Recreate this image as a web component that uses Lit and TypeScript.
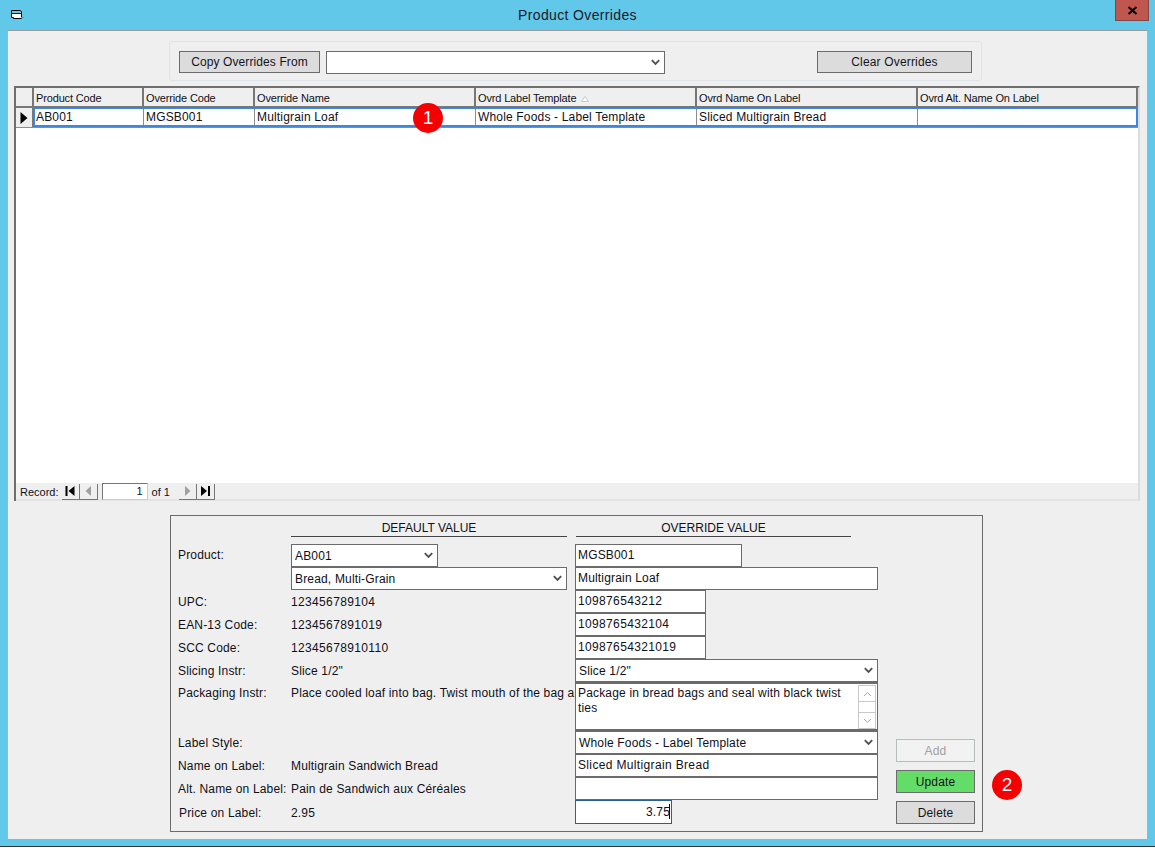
import { LitElement, html, css } from "lit";
import { customElement } from "lit/decorators.js";

const chev = html`<svg class="chev" width="9" height="7" viewBox="0 0 9 7"><path d="M0.8 1.2 L4.5 5 L8.2 1.2" fill="none" stroke="#505050" stroke-width="1.8"/></svg>`;

const cols = [
  ["Product Code", "AB001", 110],
  ["Override Code", "MGSB001", 111],
  ["Override Name", "Multigrain Loaf", 221],
  ["Ovrd Label Template", "Whole Foods - Label Template", 221],
  ["Ovrd Name On Label", "Sliced Multigrain Bread", 221],
  ["Ovrd Alt. Name On Label", "", 220],
] as const;

@customElement("app-root")
export class AppRoot extends LitElement {
  static styles = css`
    :host { display: block; width: 1155px; height: 848px; overflow: hidden; font-family: "Liberation Sans", Arial, sans-serif; font-size: 12px; color: #101018; letter-spacing: 0.17px; }
    * { box-sizing: border-box; }
    .win { width: 1155px; height: 847px; background: #62c8ea; border-bottom: 1px solid #333; display: flex; flex-direction: column; padding: 0 7px 7px; position: relative; }
    .title { height: 30px; flex: none; display: flex; align-items: flex-start; justify-content: center; font-size: 14px; letter-spacing: 0.35px; padding-top: 7px; line-height: 17px; color: #1a1a2a; }
    .appicon { position: absolute; left: 10px; top: 9px; }
    .close { position: absolute; left: 1115px; top: 0; width: 34px; height: 21px; background: #c0574f; border: 1px solid #7b4a48; border-top: none; display: flex; align-items: center; justify-content: center; }
    .client { flex: 1; background: #efefef; border-top: 1px solid #9a9a9a; border-left: 1px solid #b0b0b0; border-right: 1px solid #b0b0b0; padding: 10px 6px 0; display: flex; flex-direction: column; position: relative; }
    .toolbar { width: 813px; height: 40px; margin-left: 155px; flex: none; border: 1px solid #dde4ea; border-radius: 3px; padding: 9px 10px 0 8px; display: flex; align-items: flex-start; }
    .btn { height: 22px; border: 1px solid #6b6b6b; background: #dcdcdc; display: flex; align-items: center; justify-content: center; color: #14141e; flex: none; }
    .copy { width: 141px; margin-left: 1px; letter-spacing: 0.1px; }
    .sel { background: #fff; border: 1px solid #6b6b6b; height: 23px; display: flex; align-items: center; padding: 0 4px 0 3px; justify-content: space-between; flex: none; }
    .sel .chev { flex: none; }
    .tsel { width: 339px; margin-left: 6px; }
    .clear { width: 155px; margin-left: 152px; }
    .grid { margin-top: 5px; width: 1126px; height: 415px; flex: none; background: #fff; border: 2px solid #6f6f6f; border-bottom: none; border-right-color: #dcdcdc; display: flex; flex-direction: column; position: relative; }
    .ghead, .grow { display: flex; flex: none; }
    .ghead { height: 20px; background: #efefef; }
    .ghead .c { flex: none; display: flex; align-items: flex-start; border-right: 2px solid #777; border-bottom: 2px solid #777; padding: 3px 0 0 2px; font-size: 11px; letter-spacing: -0.15px; line-height: 14px; white-space: nowrap; }
    .ghead .sel0 { width: 18px; padding: 0; }
    .grow { height: 20px; border-bottom: 1px solid #8c8c8c; }
    .grow .mark { width: 18px; flex: none; background: #efefef; border-right: 2px solid #777; display: flex; align-items: center; justify-content: center; }
    .gcells { flex: 1 1 0; min-width: 0; display: flex; border: 2px solid #3e87dd; border-top-width: 1px; border-left-width: 1px; }
    .grow .c { flex: none; border-right: 1px solid #8c8c8c; padding: 1px 0 0 2px; line-height: 14px; white-space: nowrap; overflow: hidden; }
    .grow .c:first-child { padding-left: 1px; }
    .grow .c:last-child { border-right: none; flex: 1 1 0; min-width: 0; }
    .sortmark { margin: 5px 0 0 5px; flex: none; }
    .gbody { flex: 1; }
    .nav { height: 18px; flex: none; background: #efefef; border-bottom: 2px solid #e4e4e4; display: flex; align-items: center; padding: 1px 0 0 4px; font-size: 11px; line-height: 14px; letter-spacing: 0; }
    .navb { width: 18px; height: 16px; background: #efefef; border-right: 1px solid #777; border-bottom: 1px solid #777; display: flex; align-items: center; justify-content: center; }
    .navb.first { margin-left: 3px; }
    .navnum { width: 46px; height: 17px; background: #fff; border: 1px solid #777; border-bottom-color: #ccc; border-right-color: #ccc; margin: 0 4px; text-align: right; padding-right: 4px; line-height: 15px; }
    .navof { width: 27px; }
    .panel { margin-top: 14px; margin-left: 156px; width: 813px; height: 317px; flex: none; border: 1px solid #6b6b6b; display: grid; padding: 0 0 0 7px; grid-template-columns: 113px 284px 321px 79px; grid-template-rows: 28px 23px 23px 23px 23px 23px 23px 49px 23px 23px 23px 23px; }
    .ph { letter-spacing: 0; text-align: center; border-bottom: 1px solid #444; height: 21px; padding-top: 5px; line-height: 14px; }
    .ph.d { width: 276px; grid-column: 2; }
    .ph.o { width: 275px; grid-column: 3; margin-left: 1px; }
    .lbl { grid-column: 1; display: flex; align-items: center; white-space: nowrap; padding-top: 1px; }
    .lbl.tight { padding-top: 0; padding-bottom: 1px; }
    .lbl.low { padding-top: 3px; padding-left: 1px; }
    .val { grid-column: 2; display: flex; align-items: center; white-space: nowrap; padding-top: 1px; }
    .val.low { padding-top: 3px; }
    .num { letter-spacing: 0.35px; }
    .lbl.packlbl, .val.packval { align-items: flex-start; padding-top: 4px; }
    .val.packval { overflow: hidden; width: 284px; }
    .c3 { grid-column: 3; }
    .inp { background: #fff; border: 1px solid #6b6b6b; height: 23px; padding: 0 2px 2px; display: flex; align-items: center; white-space: nowrap; }
    .w302 { width: 303px; }
    .w166 { width: 167px; }
    .w130 { width: 131px; }
    .area { position: relative; height: 49px; width: 303px; background: #fff; border: 2px solid #6b6b6b; border-width: 2px 1px; padding: 2px 20px 0 2px; line-height: 15px; }
    .sb { position: absolute; right: 1px; top: 1px; width: 18px; height: 44px; border: 1px solid #c8c8c8; display: grid; grid-template-rows: 15px 1fr 15px; }
    .sb div { display: flex; align-items: center; justify-content: center; }
    .sb div:nth-child(2) { border-top: 1px solid #c8c8c8; border-bottom: 1px solid #c8c8c8; }
    .price { width: 97px; height: 24px; border: 1px solid #2c5f8e; background: #fff; text-align: right; padding-right: 1px; line-height: 22px; }
    .caret { display: inline-block; width: 1px; height: 15px; background: #000; vertical-align: -3px; margin-left: -1px; }
    .sel1 { width: 147px; }
    .sel2 { width: 276px; }
    .g2 { grid-column: 2; }
    .actions { grid-column: 4; grid-row: 9 / 13; display: flex; flex-direction: column; gap: 8px; padding-top: 8px; }
    .actions .btn { width: 79px; height: 23px; }
    .btn.add { background: #f2f2f2; border-color: #b4bcbc; color: #a0a0a0; }
    .btn.upd { background: #63dd67; }
    .badge { position: absolute; width: 30px; height: 30px; border-radius: 50%; background: #f40000; color: #fff; font-size: 19px; letter-spacing: 0; display: flex; align-items: center; justify-content: center; }
    .b1 { left: 405px; top: 72px; }
    .b2 { left: 984px; top: 739px; }
  `;

  render() {
    return html`<div class="win">
      <svg class="appicon" width="15" height="11" viewBox="0 0 15 11">
        <path d="M1.500 1.500h9v1h1v7h-8v-1h-2z" fill="#fff" stroke="#000"/>
        <rect x="2" y="2" width="8.500" height="2" fill="#62c8ea"/>
        <rect x="2" y="4" width="9" height="1" fill="#000"/>
        <rect x="11" y="8" width="3" height="1" fill="#7d8a90"/>
      </svg>
      <div class="title">Product Overrides</div>
      <div class="close"><svg width="11" height="9" viewBox="0 0 11 9"><path d="M1.500 1 L9.500 8 M9.500 1 L1.500 8" stroke="#000" stroke-width="2.2"/></svg></div>
      <div class="client">
        <div class="toolbar">
          <div class="btn copy">Copy Overrides From</div>
          <div class="sel tsel"><span></span>${chev}</div>
          <div class="btn clear">Clear Overrides</div>
        </div>
        <div class="grid">
          <div class="ghead">
            <div class="c sel0"></div>
            ${cols.map(([h, , w], i) => html`<div class="c" style="width:${w}px">${h}${i === 3 ? html`<svg class="sortmark" width="8" height="6" viewBox="0 0 8 6"><path d="M0.500 5.500 L4 0.500 L7.500 5.500z" fill="#fafafa" stroke="#c8c8c8"/></svg>` : ""}</div>`)}
          </div>
          <div class="grow">
            <div class="mark"><svg width="8" height="12" viewBox="0 0 8 12"><path d="M0.500 0 L7.500 6 L0.500 12z" fill="#000"/></svg></div>
            <div class="gcells">
              ${cols.map(([, v, w], i) => html`<div class="c" style="width:${i === 0 ? w - 1 : w}px">${v}</div>`)}
            </div>
          </div>
          <div class="gbody"></div>
          <div class="nav">
            <span>Record:</span>
            <div class="navb first"><svg width="11" height="10" viewBox="0 0 11 10"><path d="M0.500 0h2v10h-2zM9.500 0v10l-6-5z" fill="#000"/></svg></div>
            <div class="navb"><svg width="7" height="10" viewBox="0 0 7 10"><path d="M6 0v10L0.500 5z" fill="#a0a0a0"/></svg></div>
            <div class="navnum">1</div>
            <div class="navof">of 1</div>
            <div class="navb"><svg width="7" height="10" viewBox="0 0 7 10"><path d="M1 0v10L6.500 5z" fill="#a0a0a0"/></svg></div>
            <div class="navb"><svg width="11" height="10" viewBox="0 0 11 10"><path d="M1 0v10l6-5zM8 0h2v10H8z" fill="#000"/></svg></div>
          </div>
        </div>
        <div class="panel">
          <div class="ph d">DEFAULT VALUE</div>
          <div class="ph o">OVERRIDE VALUE</div>
          <div></div>

          <div class="lbl tight">Product:</div>
          <div class="sel sel1 g2">AB001 ${chev}</div>
          <div class="inp c3 w166">MGSB001</div>

          <div class="sel sel2 g2">Bread, Multi-Grain ${chev}</div>
          <div class="inp c3 w302">Multigrain Loaf</div>

          <div class="lbl">UPC:</div><div class="val num">123456789104</div>
          <div class="inp c3 w130 num">109876543212</div>
          <div class="lbl">EAN-13 Code:</div><div class="val num">1234567891019</div>
          <div class="inp c3 w130 num">1098765432104</div>
          <div class="lbl">SCC Code:</div><div class="val num">12345678910110</div>
          <div class="inp c3 w130 num">10987654321019</div>

          <div class="lbl">Slicing Instr:</div><div class="val">Slice 1/2"</div>
          <div class="sel c3 w302">Slice 1/2" ${chev}</div>

          <div class="lbl packlbl">Packaging Instr:</div>
          <div class="val packval">Place cooled loaf into bag. Twist mouth of the bag and seal</div>
          <div class="area c3">Package in bread bags and seal with black twist ties
            <div class="sb">
              <div><svg width="9" height="6" viewBox="0 0 9 6"><path d="M1 5 L4.500 1.500 L8 5" fill="none" stroke="#a8a8a8"/></svg></div>
              <div></div>
              <div><svg width="9" height="6" viewBox="0 0 9 6"><path d="M1 1 L4.500 4.500 L8 1" fill="none" stroke="#a8a8a8"/></svg></div>
            </div>
          </div>

          <div class="lbl">Label Style:</div><div></div>
          <div class="sel c3 w302">Whole Foods - Label Template ${chev}</div>

          <div class="lbl">Name on Label:</div><div class="val">Multigrain Sandwich Bread</div>
          <div class="inp c3 w302 num">Sliced Multigrain Bread</div>

          <div class="lbl">Alt. Name on Label:</div><div class="val">Pain de Sandwich aux Céréales</div>
          <div class="inp c3 w302"></div>

          <div class="lbl low">Price on Label:</div><div class="val low">2.95</div>
          <div class="price c3">3.75<span class="caret"></span></div>

          <div class="actions">
            <div class="btn add">Add</div>
            <div class="btn upd">Update</div>
            <div class="btn">Delete</div>
          </div>
        </div>
        <div class="badge b1">1</div>
        <div class="badge b2">2</div>
      </div>
    </div>`;
  }
}
